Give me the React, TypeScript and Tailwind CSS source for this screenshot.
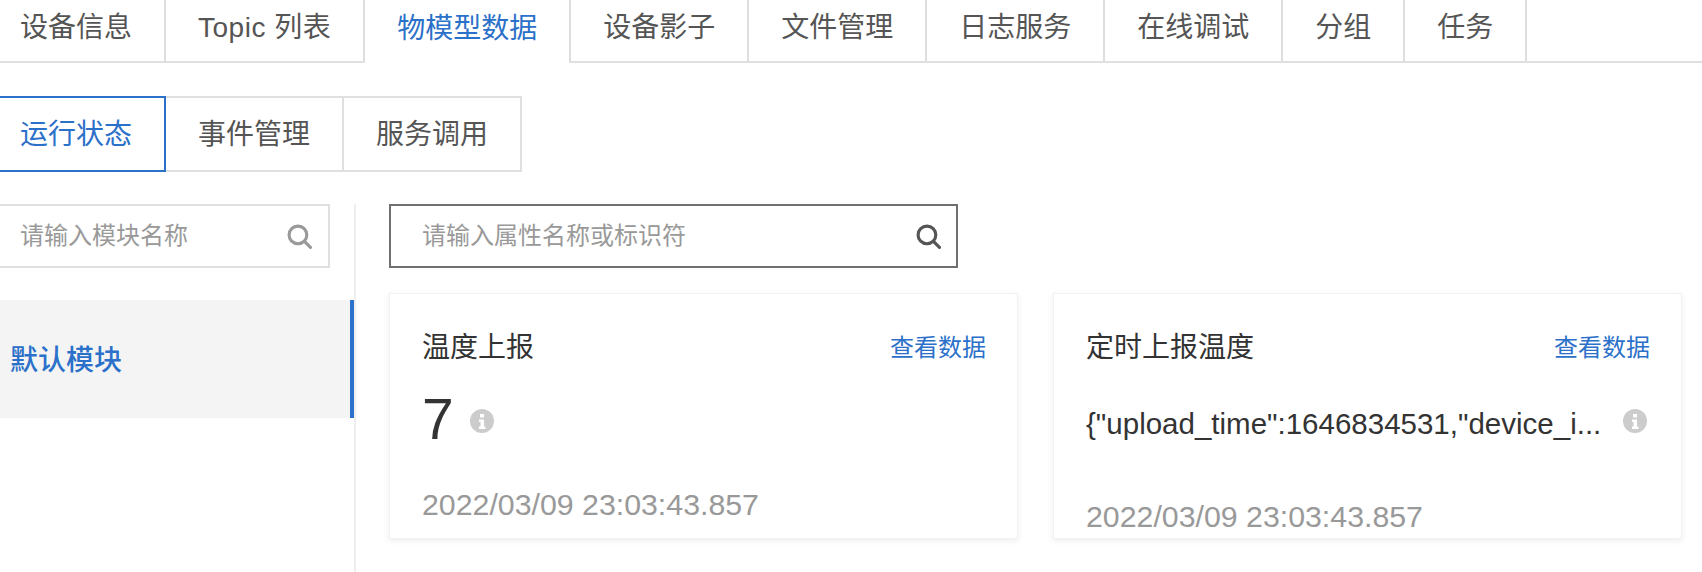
const CJK = "font-['Liberation_Sans','Noto_Sans_CJK_SC',sans-serif]";

const tabs = ["设备信息", "Topic 列表", "物模型数据", "设备影子", "文件管理", "日志服务", "在线调试", "分组", "任务"];
const subTabs = ["运行状态", "事件管理", "服务调用"];

function SearchIcon({ className }: { className: string }) {
  return (
    <svg viewBox="0 0 24 24" fill="none" stroke="currentColor" strokeWidth="3" className={className}>
      <circle cx="10.500" cy="10.500" r="8.500" />
      <path d="M17 17l5.500 5.500" strokeLinecap="round" />
    </svg>
  );
}

function InfoIcon({ className }: { className: string }) {
  return (
    <svg viewBox="0 0 24 24" className={className}>
      <circle cx="12" cy="12" r="12" fill="#cccccc" />
      <rect x="10" y="5" width="4" height="3.500" fill="#fff" />
      <path d="M9 10.500h5v7h1.500V20h-6.500v-2.500h1.500v-4.500H9z" fill="#fff" />
    </svg>
  );
}

function Card({ title, time, children }: { title: string; time: string; children: React.ReactNode }) {
  return (
    <div className="h-[246px] w-[629px] bg-white border border-[#f2f2f2] shadow-[0_2px_6px_rgba(0,0,0,0.07)] pl-[32px] pr-[33px] flex flex-col overflow-hidden">
      <div className="flex items-center justify-between mt-[32px] h-[44px] shrink-0">
        <span className="text-[28px] text-[#333333]">{title}</span>
        <a className="text-[24px] text-[#2b70c9] mr-[-2px]">查看数据</a>
      </div>
      {children}
      <div className="text-[#999999] text-[30.300px] leading-[30px] whitespace-nowrap">{time}</div>
    </div>
  );
}

export default function App() {
  return (
    <div className={`${CJK} w-[1702px] h-[572px] overflow-hidden bg-white`}>
      <div className="flex h-[63px] border-b-2 border-[#e0e0e0]">
        {tabs.map((t, i) => (
          <div
            key={t}
            className={
              "flex items-center border-r-2 border-[#dedede] text-[28px] pb-[6px] " +
              (i === 0 ? "pl-[20px] pr-[32px] " : "px-[32px] ") +
              (i === 1 ? "tracking-[0.500px] " : "") +
              (i === 2 ? "text-[#2b70c9] bg-white h-[63px]" : "text-[#555555]")
            }
          >
            {t}
          </div>
        ))}
      </div>

      <div className="flex mt-[33px] h-[76px]">
        {subTabs.map((t, i) => (
          <div
            key={t}
            className={
              "flex items-center text-[28px] pt-[1px] border-2 border-l-0 " +
              (i === 0
                ? "pl-[20px] pr-[32px] text-[#2b70c9] border-[#2b70c9]"
                : "px-[32px] text-[#555555] border-[#e0e0e0]")
            }
          >
            {t}
          </div>
        ))}
      </div>

      <div className="flex mt-[32px]">
        <div className="w-[356px] h-[368px] border-r-2 border-[#eeeeee] shrink-0">
          <div className="w-[330px] h-[64px] border-2 border-l-0 border-[#e0e0e0] flex items-center justify-between pl-[20px] pr-[16px]">
            <span className="text-[24px] text-[#999999]">请输入模块名称</span>
            <SearchIcon className="w-[25px] h-[25px] text-[#999999]" />
          </div>
          <div className="mt-[32px] h-[118px] w-[354px] bg-[#f4f4f4] border-r-4 border-[#2b70c9] flex items-center pl-[10px] pt-[3px] text-[28px] font-medium text-[#2b70c9]">
            默认模块
          </div>
        </div>

        <div className="ml-[33px]">
          <div className="w-[569px] h-[64px] border-2 border-[#707070] flex items-center justify-between pl-[31px] pr-[15px]">
            <span className="text-[24px] text-[#999999]">请输入属性名称或标识符</span>
            <SearchIcon className="w-[25px] h-[25px] text-[#555555]" />
          </div>
          <div className="flex gap-[35px] mt-[25px]">
            <Card title="温度上报" time="2022/03/09 23:03:43.857">
              <div className="flex items-center mt-[19px] mb-[41px] h-[60px] shrink-0">
                <span className="text-[57px] leading-none text-[#333333]">7</span>
                <InfoIcon className="w-[24px] h-[24px] ml-[16px] mt-[4px]" />
              </div>
            </Card>
            <Card title="定时上报温度" time="2022/03/09 23:03:43.857">
              <div className="flex items-start mt-[34px] mb-[58px] h-[40px] shrink-0">
                <span className="text-[29.500px] leading-[40px] text-[#333333] w-[517px] whitespace-nowrap">
                  {'{"upload_time":1646834531,"device_i...'}
                </span>
                <InfoIcon className="w-[24px] h-[24px] ml-[20px] mt-[5px]" />
              </div>
            </Card>
          </div>
        </div>
      </div>
    </div>
  );
}
